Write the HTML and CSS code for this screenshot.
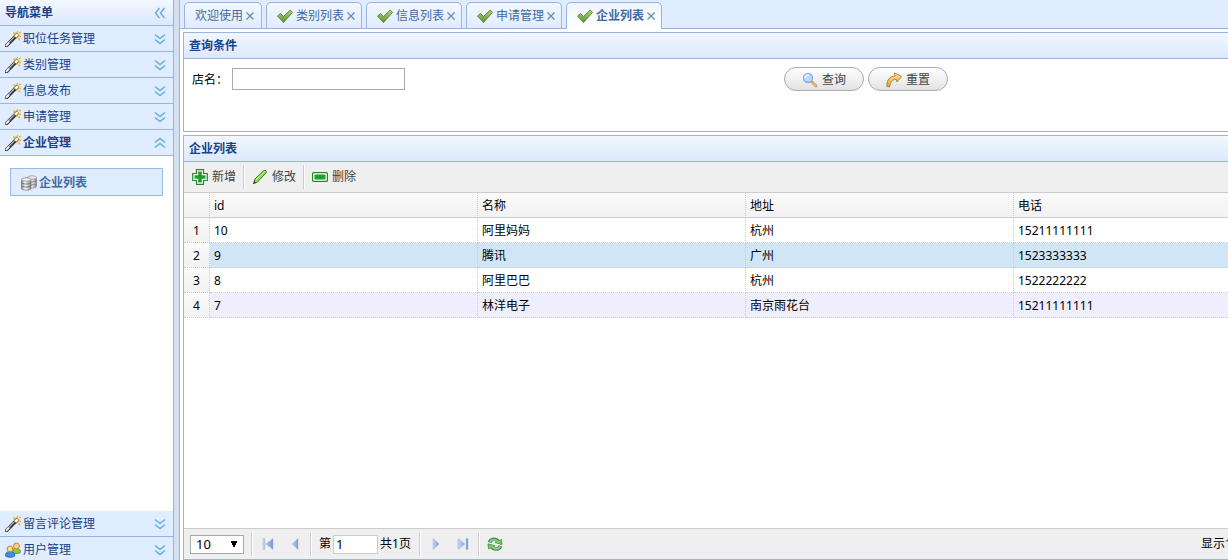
FILE: index.html
```html
<!DOCTYPE html>
<html lang="zh-CN">
<head>
  <meta charset="UTF-8" />
  <meta name="viewport" content="width=device-width, initial-scale=1.0"/>
  <title>企业列表</title>
  <link rel="stylesheet" href="styles.css">
</head>
<body>

  <!-- Icons -->
  <svg class="sprite" aria-hidden="true">
    <defs>
      <linearGradient id="greenFill" x1="0" y1="0" x2="0" y2="1">
        <stop offset="0" stop-color="#b4d47c"/><stop offset="1" stop-color="#5f9130"/>
      </linearGradient>
      <linearGradient id="arrowFill" x1="0" y1="0" x2="1" y2="0">
        <stop offset="0" stop-color="#c5d6f7"/><stop offset="1" stop-color="#7795d6"/>
      </linearGradient>
      <linearGradient id="goldFill" x1="0" y1="0" x2="0" y2="1">
        <stop offset="0" stop-color="#ffe08a"/><stop offset="1" stop-color="#f0a43a"/>
      </linearGradient>
      <linearGradient id="diskFill" x1="0" y1="0" x2="1" y2="0">
        <stop offset="0" stop-color="#8c8c8c"/><stop offset=".4" stop-color="#fff"/><stop offset="1" stop-color="#8a8a8a"/>
      </linearGradient>
    </defs>
    <symbol id="wand" viewBox="0 0 16 16">
      <path d="M8.500 1l2.500 1 1.500-2 1 1.500L16 .5l-.7 3 .7 1.500-1 1.500.5 3-2.500-1.200-2.500-1-3-4z" fill="#f8dc8c"/>
      <path d="M8.500 1.500l1.500 1M12.500 0v1.500M15.500 1l-1 1M14.500 5.500H16M13.500 8l1.500 1" stroke="#e0a93a" stroke-width="1.200"/>
      <path d="M1.500 14.500L10.500 5.500" stroke="#3a3a3c" stroke-width="3.800" stroke-linecap="round"/>
      <path d="M1.700 13.500L9.500 5.700" stroke="#b9bbc0" stroke-width="1.100" stroke-linecap="round"/>
      <path d="M1.500 14.300l2-2" stroke="#eee" stroke-width="2" stroke-linecap="round"/>
      <path d="M10 6l3-3" stroke="#756a4c" stroke-width="4"/>
      <path d="M10.300 5.700l2.400-2.400" stroke="#fffdf2" stroke-width="2.600"/>
    </symbol>
    <symbol id="users" viewBox="0 0 16 16">
      <path d="M7.500 10c0-3 1.500-4 3.500-4s4.500 1 4.500 4.500c-2 1.500-6 1.500-8 0z" fill="#8fc63d" stroke="#5d8f22" stroke-width=".8"/>
      <circle cx="11.500" cy="4" r="2.900" fill="#f8d489" stroke="#b77f27" stroke-width=".9"/>
      <path d="M.5 14c0-3.500 2-4.500 4.500-4.500s4.800 1 4.800 4.500c-2.300 1.800-7 1.800-9.300 0z" fill="#3f8ee0" stroke="#1f5ca8" stroke-width=".8"/>
      <circle cx="5" cy="7" r="2.900" fill="#fadb97" stroke="#b77f27" stroke-width=".9"/>
    </symbol>
    <symbol id="database" viewBox="0 0 16 16">
      <path d="M6.500 2.500v9c0 2 9 2 9 0v-9z" fill="url(#diskFill)" stroke="#8b8b8b" stroke-width=".7"/>
      <ellipse cx="11" cy="2.500" rx="4.500" ry="1.700" fill="#eee" stroke="#888" stroke-width=".7"/>
      <path d="M6.500 5.500c0 1.800 9 1.800 9 0M6.500 8.500c0 1.800 9 1.800 9 0" fill="none" stroke="#777" stroke-width=".8"/>
      <path d="M.5 4.500v9c0 2.300 9.500 2.300 9.500 0v-9z" fill="url(#diskFill)" stroke="#777" stroke-width=".7"/>
      <ellipse cx="5.250" cy="4.500" rx="4.750" ry="1.700" fill="#f3f3f3" stroke="#777" stroke-width=".7"/>
      <path d="M.5 7.500c0 2 9.500 2 9.500 0M.5 10.500c0 2 9.500 2 9.500 0" fill="none" stroke="#666" stroke-width=".9"/>
    </symbol>
    <symbol id="check" viewBox="0 0 16 16">
      <path d="M.5 8l3-2.500 3 3 6.800-6.500 2.200 2.400-9 10.100z" fill="url(#greenFill)" stroke="#567f34" stroke-width=".9" stroke-linejoin="round"/>
    </symbol>
    <symbol id="cross" viewBox="0 0 8 8">
      <path d="M.5 .5l7 7M7.500 .5l-7 7" stroke="#6488b8" stroke-width="1.200"/>
    </symbol>
    <symbol id="down" viewBox="0 0 12 12">
      <path d="M1 1.500l5 4 5-4M1 6.500l5 4 5-4" fill="none" stroke="#62afe8" stroke-width="1.500"/>
    </symbol>
    <symbol id="up" viewBox="0 0 12 12">
      <path d="M1 5.500l5-4 5 4M1 10.500l5-4 5 4" fill="none" stroke="#62afe8" stroke-width="1.500"/>
    </symbol>
    <symbol id="left" viewBox="0 0 12 12">
      <path d="M5.500 1l-4 5 4 5M10.500 1l-4 5 4 5" fill="none" stroke="#62afe8" stroke-width="1.500"/>
    </symbol>
    <symbol id="search" viewBox="0 0 16 16">
      <path d="M10 10l4 4" stroke="#c28a4c" stroke-width="2.600" stroke-linecap="round"/>
      <path d="M10.500 10.500l3.300 3.300" stroke="#f5c27a" stroke-width="1.400" stroke-linecap="round"/>
      <circle cx="6" cy="6" r="4.500" fill="#b7dcfb" stroke="#86aee2" stroke-width="1.300"/>
      <path d="M3.200 6c0-2.500 2-3.300 3.800-2.800" fill="none" stroke="#f4fbff" stroke-width="1.500"/>
    </symbol>
    <symbol id="redo" viewBox="0 0 16 16">
      <path d="M.8 14.500C.8 7.500 4 4.500 9 4L8.500 1l7 3.500L11 10l-.7-2.700C6.500 7.500 4.500 9.500 3.500 15z" fill="url(#goldFill)" stroke="#a87a3c" stroke-width=".9" stroke-linejoin="round"/>
    </symbol>
    <symbol id="add" viewBox="0 0 16 16">
      <path d="M4.500 .7h7v3.800h3.800v7h-3.800v3.800h-7v-3.800H.7v-7h3.800z" fill="#fff" stroke="#22862a" stroke-width="1.200" stroke-linejoin="round"/>
      <path d="M6.200 2.500h3.600v3.700h3.700v3.600H9.800v3.700H6.200V9.800H2.500V6.200h3.700z" fill="#239a2b"/>
    </symbol>
    <symbol id="pencil" viewBox="0 0 16 16">
      <path d="M1.500 14.500l1.500-4.500L12 1.500c1-.8 3 .8 2.300 2L5.500 13z" fill="#8bdc55" stroke="#3a7d22" stroke-width="1" stroke-linejoin="round"/>
      <path d="M1.200 15l1-3 2 1.800z" fill="#245a17"/>
      <path d="M4 10.800l8.500-8" stroke="#d2f7b3" stroke-width="1"/>
    </symbol>
    <symbol id="remove" viewBox="0 0 16 16">
      <rect x=".6" y="3.600" width="14.800" height="8.800" rx="1" fill="#fff" stroke="#22862a" stroke-width="1.200"/>
      <rect x="2.500" y="5.500" width="11" height="5" fill="#239a2b"/>
    </symbol>
    <symbol id="first" viewBox="0 0 16 16">
      <path d="M3 2.500h2v11H3zM13 2.500v11L6 8z" fill="url(#arrowFill)" stroke="#9fb4e4" stroke-width=".5"/>
    </symbol>
    <symbol id="prev" viewBox="0 0 16 16">
      <path d="M11 2.500v11L5 8z" fill="url(#arrowFill)" stroke="#9fb4e4" stroke-width=".5"/>
    </symbol>
    <symbol id="next" viewBox="0 0 16 16">
      <path d="M5 2.500v11L11 8z" fill="url(#arrowFill)" stroke="#9fb4e4" stroke-width=".5"/>
    </symbol>
    <symbol id="last" viewBox="0 0 16 16">
      <path d="M11 2.500h2v11h-2zM3 2.500v11L10 8z" fill="url(#arrowFill)" stroke="#9fb4e4" stroke-width=".5"/>
    </symbol>
    <symbol id="refresh" viewBox="0 0 16 16">
      <path d="M2.500 6.500C4 2.500 9 2.300 11.500 5.500" fill="none" stroke="#3f8f3f" stroke-width="3.600"/>
      <path d="M8 6.500l6.500-3 .5 5z" fill="#7cc576" stroke="#3f8f3f" stroke-width=".8" stroke-linejoin="round"/>
      <path d="M2.800 6C4.500 3 8.500 2.800 11.500 6" fill="none" stroke="#8ed187" stroke-width="1.900"/>
      <path d="M13.500 10C12 13.800 7 14 4.500 10.800" fill="none" stroke="#3f8f3f" stroke-width="3.600"/>
      <path d="M8 9.800l-6.500 3-.5-5z" fill="#7cc576" stroke="#3f8f3f" stroke-width=".8" stroke-linejoin="round"/>
      <path d="M13.200 10.500C11.500 13.500 7.500 13.500 4.500 10.300" fill="none" stroke="#8ed187" stroke-width="1.900"/>
    </symbol>
  </svg>

  <div class="layout">
    <nav class="sidebar">
      <div class="menu-title">
        <span>导航菜单</span>
        <button class="icon-btn" aria-label="收起"><svg class="arrow"><use href="#left"/></svg></button>
      </div>
      <button class="menu-item"><svg class="icon"><use href="#wand"/></svg><span>职位任务管理</span><svg class="arrow"><use href="#down"/></svg></button>
      <button class="menu-item"><svg class="icon"><use href="#wand"/></svg><span>类别管理</span><svg class="arrow"><use href="#down"/></svg></button>
      <button class="menu-item"><svg class="icon"><use href="#wand"/></svg><span>信息发布</span><svg class="arrow"><use href="#down"/></svg></button>
      <button class="menu-item"><svg class="icon"><use href="#wand"/></svg><span>申请管理</span><svg class="arrow"><use href="#down"/></svg></button>
      <button class="menu-item open"><svg class="icon"><use href="#wand"/></svg><span>企业管理</span><svg class="arrow"><use href="#up"/></svg></button>
      <div class="submenu">
        <a class="submenu-link" href="#"><svg class="icon"><use href="#database"/></svg><span>企业列表</span></a>
      </div>
      <button class="menu-item"><svg class="icon"><use href="#wand"/></svg><span>留言评论管理</span><svg class="arrow"><use href="#down"/></svg></button>
      <button class="menu-item"><svg class="icon"><use href="#users"/></svg><span>用户管理</span><svg class="arrow"><use href="#down"/></svg></button>
    </nav>

    <main class="content">
      <div class="tabs">
        <div class="tab"><a href="#">欢迎使用</a><button class="icon-btn" aria-label="关闭"><svg class="close"><use href="#cross"/></svg></button></div>
        <div class="tab"><svg class="icon"><use href="#check"/></svg><a href="#">类别列表</a><button class="icon-btn" aria-label="关闭"><svg class="close"><use href="#cross"/></svg></button></div>
        <div class="tab"><svg class="icon"><use href="#check"/></svg><a href="#">信息列表</a><button class="icon-btn" aria-label="关闭"><svg class="close"><use href="#cross"/></svg></button></div>
        <div class="tab"><svg class="icon"><use href="#check"/></svg><a href="#">申请管理</a><button class="icon-btn" aria-label="关闭"><svg class="close"><use href="#cross"/></svg></button></div>
        <div class="tab active"><svg class="icon"><use href="#check"/></svg><a href="#">企业列表</a><button class="icon-btn" aria-label="关闭"><svg class="close"><use href="#cross"/></svg></button></div>
      </div>

      <div class="panels">
        <section class="panel">
          <h2 class="panel-title">查询条件</h2>
          <form class="search-form">
            <div class="field">
              <label for="shopName">店名：</label>
              <input type="text" id="shopName">
            </div>
            <div class="form-buttons">
              <button type="button" class="round-btn"><svg class="icon"><use href="#search"/></svg>查询</button>
              <button type="reset" class="round-btn"><svg class="icon"><use href="#redo"/></svg>重置</button>
            </div>
          </form>
        </section>

        <section class="panel list-panel">
          <h2 class="panel-title">企业列表</h2>
          <div class="toolbar">
            <button class="tool-btn"><svg class="icon"><use href="#add"/></svg>新增</button>
            <span class="separator"></span>
            <button class="tool-btn"><svg class="icon"><use href="#pencil"/></svg>修改</button>
            <span class="separator"></span>
            <button class="tool-btn"><svg class="icon"><use href="#remove"/></svg>删除</button>
          </div>
          <div class="grid-view">
            <table class="grid">
              <colgroup><col class="col-num"><col><col><col><col></colgroup>
              <thead>
                <tr><th></th><th>id</th><th>名称</th><th>地址</th><th>电话</th></tr>
              </thead>
              <tbody>
                <tr><td>1</td><td>10</td><td>阿里妈妈</td><td>杭州</td><td>15211111111</td></tr>
                <tr class="hover"><td>2</td><td>9</td><td>腾讯</td><td>广州</td><td>1523333333</td></tr>
                <tr><td>3</td><td>8</td><td>阿里巴巴</td><td>杭州</td><td>1522222222</td></tr>
                <tr class="striped"><td>4</td><td>7</td><td>林洋电子</td><td>南京雨花台</td><td>15211111111</td></tr>
              </tbody>
            </table>
          </div>
          <div class="pager">
            <select class="page-size" aria-label="每页条数"><option>10</option><option>20</option><option>50</option></select>
            <span class="separator"></span>
            <button class="icon-btn" aria-label="首页"><svg class="icon"><use href="#first"/></svg></button>
            <button class="icon-btn" aria-label="上一页"><svg class="icon"><use href="#prev"/></svg></button>
            <span class="separator"></span>
            <div class="page-num">
              <label for="page">第</label><input type="text" id="page" value="1"><span>共1页</span>
            </div>
            <span class="separator"></span>
            <button class="icon-btn" aria-label="下一页"><svg class="icon"><use href="#next"/></svg></button>
            <button class="icon-btn" aria-label="末页"><svg class="icon"><use href="#last"/></svg></button>
            <span class="separator"></span>
            <button class="icon-btn" aria-label="刷新"><svg class="icon"><use href="#refresh"/></svg></button>
            <span class="pager-info">显示1</span>
          </div>
        </section>
      </div>
    </main>
  </div>

</body>
</html>
```

FILE: styles.css
```css
* {
  box-sizing: border-box;
}

body {
  margin: 0;
  font-family: "Noto Sans", "Noto Sans CJK SC", sans-serif;
  font-size: 12px;
  line-height: 18px;
  color: #000;
  background: #d2e0f2;
  overflow: hidden;
}

button, input, select {
  font: inherit;
  color: inherit;
}

button {
  display: flex;
  align-items: center;
  border: none;
  background: none;
  padding: 0;
  cursor: pointer;
}

a {
  color: inherit;
  text-decoration: none;
}

.sprite {
  position: absolute;
  width: 0;
  height: 0;
}

.icon {
  width: 16px;
  height: 16px;
  flex: none;
}

.arrow {
  width: 12px;
  height: 12px;
  flex: none;
}

.close {
  width: 8px;
  height: 8px;
}

.layout {
  display: flex;
  gap: 5px;
  height: 100vh;
}

/* Left menu */
.sidebar {
  width: 174px;
  flex: none;
  display: flex;
  flex-direction: column;
  background: #fff;
  border-right: 1px solid #99b4de;
  margin-bottom: -3px;
}

.menu-title,
.menu-item {
  display: flex;
  align-items: center;
  flex: none;
  height: 26px;
  padding: 0 7px 0 5px;
  border-bottom: 1px solid #99b4de;
  color: #15428b;
}

.menu-title {
  justify-content: space-between;
  font-weight: bold;
  background: linear-gradient(#f4f8ff, #dce8fc);
}

.menu-item {
  gap: 2px;
  background: #e0ecff;
}

.menu-item .arrow {
  margin-left: auto;
}

.menu-item.open {
  font-weight: bold;
}

.submenu {
  flex: 1;
  padding: 12px 10px;
}

.submenu-link {
  display: flex;
  align-items: center;
  gap: 2px;
  height: 28px;
  padding: 2px 10px 0;
  border: 1px solid #99bbe8;
  background: #e0ecff;
  color: #416aa3;
  font-weight: bold;
}

/* Tabs */
.content {
  flex: 1;
  min-width: 0;
  display: flex;
  flex-direction: column;
  background: #fff;
  border-left: 1px solid #99b4de;
}

.tabs {
  display: flex;
  flex: none;
  gap: 4px;
  height: 29px;
  padding: 2px 4px 0;
  background: #e0ecff;
  border-bottom: 1px solid #99b4de;
}

.tab {
  display: flex;
  align-items: center;
  height: 26px;
  padding: 0 6px 0 10px;
  border: 1px solid #99b4de;
  border-bottom: none;
  border-radius: 5px 5px 0 0;
  background: linear-gradient(#f2f7ff, #e0ecff);
  color: #416aa3;
}

.tab .icon {
  margin-right: 3px;
}

.tab .close {
  margin-left: 3px;
}

.tab.active {
  height: 27px;
  background: linear-gradient(#eff5ff, #fff);
  font-weight: bold;
}

.tab:first-child {
  padding-right: 7px;
}

/* Panels */
.panels {
  flex: 1;
  min-height: 0;
  display: flex;
  flex-direction: column;
  gap: 3px;
  padding: 3px 0 0 3px;
}

.panel {
  border: 1px solid #99b4de;
  border-right: none;
}

.panel-title {
  height: 26px;
  margin: 0;
  padding: 0 5px;
  font-size: 12px;
  line-height: 25px;
  color: #15428b;
  background: linear-gradient(#f2f7ff, #dce8fc);
  border-bottom: 1px solid #99b4de;
}

.search-form {
  display: grid;
  grid-template-columns: 4fr 3fr;
  min-height: 72px;
  padding: 8px 0 8px 8px;
}

.field,
.form-buttons {
  display: flex;
  align-items: center;
  height: 24px;
  gap: 4px;
}

.field label {
  font-family: "Noto Sans CJK TC", sans-serif;
}

.field input {
  width: 173px;
  height: 22px;
  padding: 1px 2px;
  border: 1px solid #a9a9a9;
}

.round-btn {
  justify-content: center;
  gap: 4px;
  width: 80px;
  height: 24px;
  padding-top: 1px;
  border: 1px solid #aaa;
  border-radius: 12px;
  background: linear-gradient(#fff, #e2e2e2);
  color: #444;
}

.list-panel {
  flex: 1;
  min-height: 0;
  display: flex;
  flex-direction: column;
}

.toolbar,
.pager {
  display: flex;
  align-items: center;
  flex: none;
  background: #efefef;
}

.toolbar {
  height: 30px;
  padding: 0 8px;
  gap: 8px;
}

.tool-btn {
  gap: 4px;
  color: #444;
}

.separator {
  width: 2px;
  height: 24px;
  border-left: 1px solid #ccc;
  border-right: 1px solid #fff;
}

.toolbar .separator {
  margin: 0 -1px;
}

/* Data grid */
.grid-view {
  flex: 1;
  min-height: 0;
  overflow: hidden;
}

.grid {
  width: 1098px;
  table-layout: fixed;
  border-collapse: separate;
  border-spacing: 0;
}

.col-num {
  width: 26px;
}

.grid th,
.grid td {
  height: 25px;
  padding: 2px 4px 0;
  line-height: 22px;
  text-align: left;
  font-weight: normal;
  border-right: 1px dotted #ccc;
  border-bottom: 1px dotted #ccc;
}

.grid th {
  height: 26px;
  background: linear-gradient(#fafafa, #f2f2f2);
  border-top: 1px solid #ccc;
  border-bottom: 1px solid #ccc;
}

.grid td:first-child {
  text-align: center;
  background: linear-gradient(#fafafa, #f2f2f2);
}

.hover td {
  background: #d0e5f5;
}

.striped td {
  background: #eeeeff;
}

/* Paging bar */
.pager {
  height: 31px;
  padding-left: 6px;
  gap: 3px;
  border-top: 1px solid #ccc;
}

.page-size {
  appearance: none;
  width: 54px;
  height: 19px;
  margin-right: 4px;
  padding: 0 5px;
  border: 1px solid #a9a9a9;
  border-radius: 0;
  background-color: #fff;
  background-image:
    conic-gradient(from -27deg at 50% 100%, #000 54deg, transparent 54deg);
  background-position: right 5px center;
  background-size: 8px 7px;
  background-repeat: no-repeat;
  font-size: 13px;
  line-height: 17px;
}

.pager .icon-btn {
  justify-content: center;
  width: 24px;
}

.page-num {
  display: flex;
  align-items: center;
  gap: 2px;
  padding: 0 5px 0 4px;
}

.page-num input {
  width: 45px;
  height: 19px;
  padding: 0 2px;
  border: 1px solid #ccc;
  font-size: 13px;
}

.pager-info {
  margin-left: auto;
  width: 27px;
  overflow: hidden;
  white-space: nowrap;
}
```
